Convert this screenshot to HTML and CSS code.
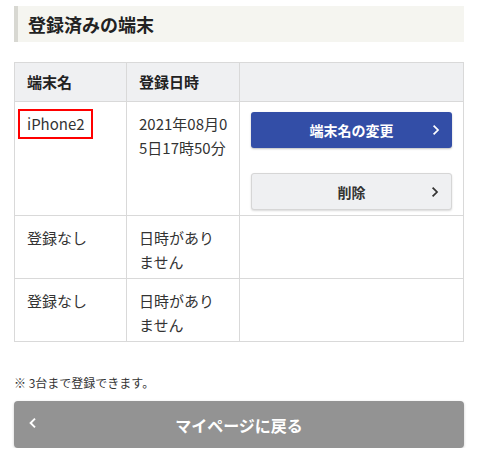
FILE: index.html
```html
<!DOCTYPE html>
<html lang="ja">
<head>
<meta charset="utf-8">
<link rel="stylesheet" href="styles.css">
</head>
<body>
<main class="page">
  <h2 class="section-title">登録済みの端末</h2>
  <table class="devices">
    <thead>
      <tr>
        <th class="col-name">端末名</th>
        <th class="col-date">登録日時</th>
        <th class="col-act"></th>
      </tr>
    </thead>
    <tbody>
      <tr>
        <td><span class="device-name">iPhone2</span></td>
        <td class="date">2021年08月05日17時50分</td>
        <td class="actions">
          <a class="btn btn-primary" href="#">端末名の変更<svg class="chev" viewBox="0 0 10 14" width="8" height="12"><path d="M2 1.5 L7.5 7 L2 12.5" fill="none" stroke="currentColor" stroke-width="2.2"/></svg></a>
          <a class="btn btn-secondary" href="#">削除<svg class="chev" viewBox="0 0 10 14" width="8" height="12"><path d="M2 1.5 L7.5 7 L2 12.5" fill="none" stroke="currentColor" stroke-width="2.2"/></svg></a>
        </td>
      </tr>
      <tr>
        <td>登録なし</td>
        <td class="date">日時がありません</td>
        <td></td>
      </tr>
      <tr>
        <td>登録なし</td>
        <td class="date">日時がありません</td>
        <td></td>
      </tr>
    </tbody>
  </table>
  <p class="note">※ 3台まで登録できます。</p>
  <a class="btn-back" href="#"><svg class="chev-left" viewBox="0 0 10 14" width="8" height="12"><path d="M7.5 1.5 L2 7 L7.5 12.5" fill="none" stroke="currentColor" stroke-width="2.4"/></svg>マイページに戻る</a>
</main>
</body>
</html>
```

FILE: styles.css
```css
* { box-sizing: border-box; }
html, body { margin: 0; padding: 0; background: #fff; }
body {
  font-family: "Noto Sans CJK JP", "Noto Sans", sans-serif;
  color: #333;
  font-size: 15px;
}
.page { padding: 6px 15px 0 14px; }
.section-title {
  margin: 0 0 20px;
  height: 36px;
  background: #f5f5f0;
  border-left: 4px solid #d8d8d2;
  padding: 0 0 0 10px;
  font-size: 18px;
  font-weight: 700;
  line-height: 36px;
  color: #222;
}
.devices {
  width: 100%;
  border-collapse: collapse;
  table-layout: fixed;
}
.devices th, .devices td {
  border: 1px solid #d9d9d9;
  text-align: left;
  vertical-align: top;
  line-height: 24px;
  font-size: 15px;
}
.devices th {
  background: #eff0f2;
  font-weight: 700;
  padding: 7px 12px;
  color: #222;
}
.devices td {
  padding: 10px 12px 4px;
  word-break: break-all;
}
.devices td.date { padding-right: 10.5px; }
.col-name { width: 112px; }
.col-date { width: 113px; }
.device-name {
  display: inline-block;
  margin: -3px 0 0 -9px;
  padding: 1px 6px 1px 7px;
  border: 2px solid #f00;
  line-height: 24px;
}
.devices td.actions { padding: 10px 11px 5px 11px; }
.btn {
  position: relative;
  display: flex;
  align-items: center;
  justify-content: center;
  width: 100%;
  text-decoration: none;
  font-size: 14px;
  font-weight: 700;
  border-radius: 3px;
}
.btn-primary {
  height: 36px;
  background: #334ea7;
  color: #fff;
  box-shadow: 0 1px 2px rgba(0,0,0,0.25);
}
.btn-secondary {
  height: 37px;
  margin-top: 25px;
  background: #eff0f2;
  color: #333;
  border: 1px solid #d6d6d6;
  box-shadow: 0 1px 2px rgba(0,0,0,0.15);
}
.chev {
  position: absolute;
  right: 12px;
  top: 50%;
  margin-top: -6px;
}
.note {
  margin: 32px 0 0;
  font-size: 12px;
  line-height: 18px;
  color: #333;
}
.btn-back {
  position: relative;
  display: flex;
  align-items: center;
  justify-content: center;
  margin-top: 9px;
  height: 47px;
  background: #939393;
  color: #fff;
  border-radius: 4px;
  text-decoration: none;
  font-size: 16px;
  font-weight: 700;
  box-shadow: 0 1px 3px rgba(0,0,0,0.2);
}
.chev-left {
  position: absolute;
  left: 15px;
  top: 50%;
  margin-top: -8px;
}
```
